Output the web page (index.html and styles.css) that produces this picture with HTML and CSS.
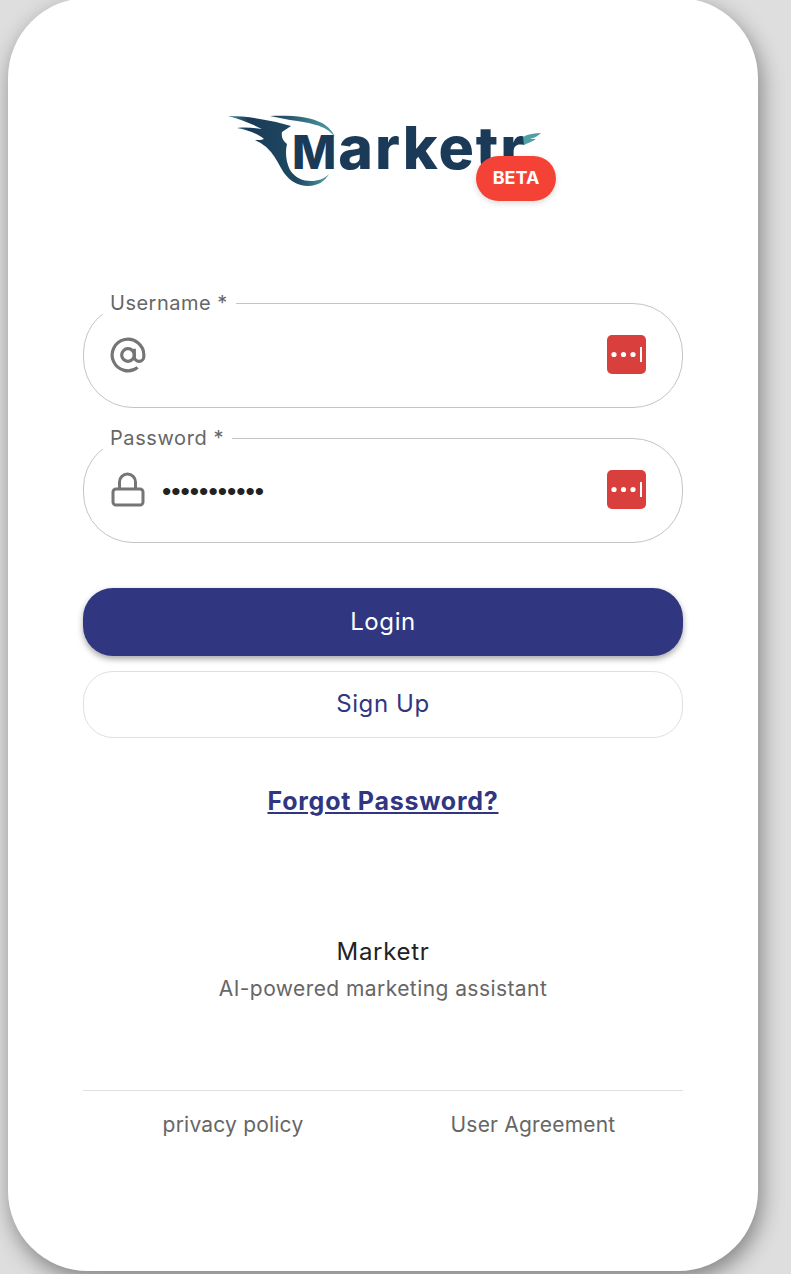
FILE: index.html

```html
<!DOCTYPE html>
<html lang="en">
<head>
  <meta charset="UTF-8">
  <meta name="viewport" content="width=device-width, initial-scale=1.0">
  <title>Marketr</title>
  <link rel="stylesheet" href="styles.css">
</head>
<body>
  <main class="card">
    <div class="logo">
      <svg class="logo-mark" viewBox="226 110 320 80" width="320" height="80">
        <defs>
          <linearGradient id="wingBody" x1="0" y1="0" x2="1" y2="0">
            <stop offset="0" stop-color="#3f8c9c"/>
            <stop offset="0.2" stop-color="#1a3a57"/>
            <stop offset="0.7" stop-color="#1f4a63"/>
            <stop offset="1" stop-color="#4f9fa8"/>
          </linearGradient>
          <linearGradient id="wingTeal" x1="0" y1="0" x2="1" y2="0">
            <stop offset="0" stop-color="#1a3a57"/>
            <stop offset="1" stop-color="#4f9fa8"/>
          </linearGradient>
        </defs>
        <path fill="url(#wingBody)" d="M228 116C246 116 262 119 276 122L291 126L282 132C281 137 283 141 287 144C285 152 286 162 290 170C295 178 303 181 311 181C318 181 324 179 329 174C325 181 318 186 308 186C298 186 290 181 284 173C279 165 276 158 271 152C266 146 261 143 255 140C259 140 262 140 264 139C258 134 248 130 237 128C246 127 254 128 262 129C252 124 240 119 228 116Z"/>
        <path fill="url(#wingTeal)" d="M270 116C288 115 309 116 322 123C329 127 333 132 335 137C330 131 324 127 316 125C306 122 297 121 290 120Z"/>
        <text class="logo-text" x="292" y="169"><tspan class="logo-cap">M</tspan><tspan>arketr</tspan></text>
        <path fill="#4f9fa8" d="M523 137C528 134 535 133 541 133C537 137 533 138 530 139C533 139 534 139 536 139C532 142 527 143 524 145Z"/>
      </svg>
      <span class="beta">BETA</span>
    </div>

    <form class="login-form">
      <fieldset class="field">
        <legend>Username *</legend>
        <div class="field-row">
          <svg class="field-icon" viewBox="0 0 24 24" width="38" height="38">
            <circle cx="12" cy="12" r="4"/>
            <path d="M16 8v5a3 3 0 0 0 6 0v-1a10 10 0 1 0-3.92 7.94"/>
          </svg>
          <input type="text" class="field-input">
          <svg class="lp-icon" viewBox="0 0 39 39" width="39" height="39">
            <rect width="39" height="39" rx="5" fill="#d93f3c"/>
            <circle cx="7" cy="19.5" r="2.6" fill="#fff"/>
            <circle cx="16.5" cy="19.5" r="2.6" fill="#fff"/>
            <circle cx="26" cy="19.5" r="2.6" fill="#fff"/>
            <rect x="33" y="12" width="2" height="15" fill="#fff"/>
          </svg>
        </div>
      </fieldset>

      <fieldset class="field">
        <legend class="legend-password">Password *</legend>
        <div class="field-row">
          <svg class="field-icon" viewBox="0 0 38 38" width="38" height="38">
            <rect x="4" y="18" width="30" height="16" rx="3" stroke-width="3"/>
            <path d="M10.5 18v-7a8 8 0 0 1 16 0v7" stroke-width="3"/>
          </svg>
          <input type="password" class="field-input" value="secretpass1">
          <svg class="lp-icon" viewBox="0 0 39 39" width="39" height="39">
            <rect width="39" height="39" rx="5" fill="#d93f3c"/>
            <circle cx="7" cy="19.5" r="2.6" fill="#fff"/>
            <circle cx="16.5" cy="19.5" r="2.6" fill="#fff"/>
            <circle cx="26" cy="19.5" r="2.6" fill="#fff"/>
            <rect x="33" y="12" width="2" height="15" fill="#fff"/>
          </svg>
        </div>
      </fieldset>

      <button type="button" class="btn btn-primary">Login</button>
      <button type="button" class="btn btn-outline">Sign Up</button>
      <a href="#" class="forgot">Forgot Password?</a>
    </form>

    <div class="about">
      <div class="about-name">Marketr</div>
      <div class="about-desc">AI-powered marketing assistant</div>
    </div>

    <footer class="links">
      <a href="#">privacy policy</a>
      <a href="#">User Agreement</a>
    </footer>
  </main>
</body>
</html>
```

FILE: styles.css

```css
* {
  box-sizing: border-box;
}
html, body {
  height: 1274px;
  overflow: hidden;
}
body {
  margin: 0;
  padding: 0 33px 0 8px;
  background: #dedede;
  font-family: Inter, Arial, sans-serif;
  color: #222;
}
.card {
  width: 750px;
  height: 1273px;
  margin-top: -2px;
  padding: 0 75px;
  background: #fff;
  border-radius: 80px;
  box-shadow: 3px 8px 22px rgba(0,0,0,0.42);
}

.logo {
  position: relative;
  height: 294px;
  padding-top: 112px;
}
.logo-mark {
  display: block;
  margin-left: 143px;
}
.logo-text {
  font-family: Inter, Arial, sans-serif;
  font-weight: 800;
  font-size: 59px;
  letter-spacing: 2px;
  fill: #1a3a57;
}
.logo-cap {
  font-size: 47px;
  letter-spacing: 2px;
}
.beta {
  position: absolute;
  left: 393px;
  top: 158px;
  width: 80px;
  height: 45px;
  border-radius: 23px;
  background: #f44336;
  color: #fff;
  font-family: Inter, Arial, sans-serif;
  font-weight: 700;
  font-size: 18px;
  line-height: 44px;
  text-align: center;
  box-shadow: 0 2px 6px rgba(0,0,0,0.15);
}

.login-form {
  display: flex;
  flex-direction: column;
}
.field {
  height: 116px;
  margin: 0 0 19px;
  padding: 0;
  border: 1px solid #c4c4c4;
  border-radius: 50px;
  min-width: 0;
}
.field legend {
  margin-left: 16px;
  padding: 0 8px 0 10px;
  font-size: 20px;
  line-height: 22px;
  letter-spacing: 0.5px;
  color: #666;
}
.field .legend-password {
  letter-spacing: 0.6px;
}
.field-row {
  display: flex;
  align-items: center;
  height: 82px;
  padding: 0 36px 0 25px;
}
.field-icon {
  flex: none;
  fill: none;
  stroke: #757575;
  stroke-width: 2;
}
.field-input {
  flex: 1;
  min-width: 0;
  height: 40px;
  margin: 2px 0 0 13px;
  border: none;
  outline: none;
  background: none;
  font-size: 26.5px;
  color: #222;
}
.lp-icon {
  flex: none;
  margin-top: -2px;
}

.btn {
  display: block;
  width: 100%;
  padding: 0 0 2px;
  font-family: Inter, Arial, sans-serif;
  font-size: 24px;
  letter-spacing: 0.6px;
  cursor: pointer;
}
.btn-primary {
  height: 68px;
  margin-top: 26px;
  border: none;
  border-radius: 30px;
  background: #303680;
  color: #fff;
  box-shadow: 0 3px 6px rgba(0,0,0,0.35);
}
.btn-outline {
  height: 67px;
  margin-top: 15px;
  border: 1px solid #e0e0e0;
  border-radius: 30px;
  background: #fff;
  color: #303680;
}
.forgot {
  margin-top: 47px;
  text-align: center;
  font-size: 25px;
  line-height: 32px;
  font-weight: 700;
  letter-spacing: 0.75px;
  color: #303680;
}

.about {
  margin-top: 119px;
  text-align: center;
}
.about-name {
  font-size: 24px;
  line-height: 32px;
  letter-spacing: 0.7px;
  color: #222;
}
.about-desc {
  margin-top: 5px;
  font-size: 21px;
  line-height: 32px;
  letter-spacing: 0.43px;
  color: #666;
}

.links {
  display: flex;
  margin-top: 85px;
  padding-top: 18px;
  border-top: 1px solid #e0e0e0;
}
.links a {
  flex: 1;
  text-align: center;
  font-size: 21px;
  line-height: 32px;
  letter-spacing: 0.2px;
  color: #666;
  text-decoration: none;
}
```
